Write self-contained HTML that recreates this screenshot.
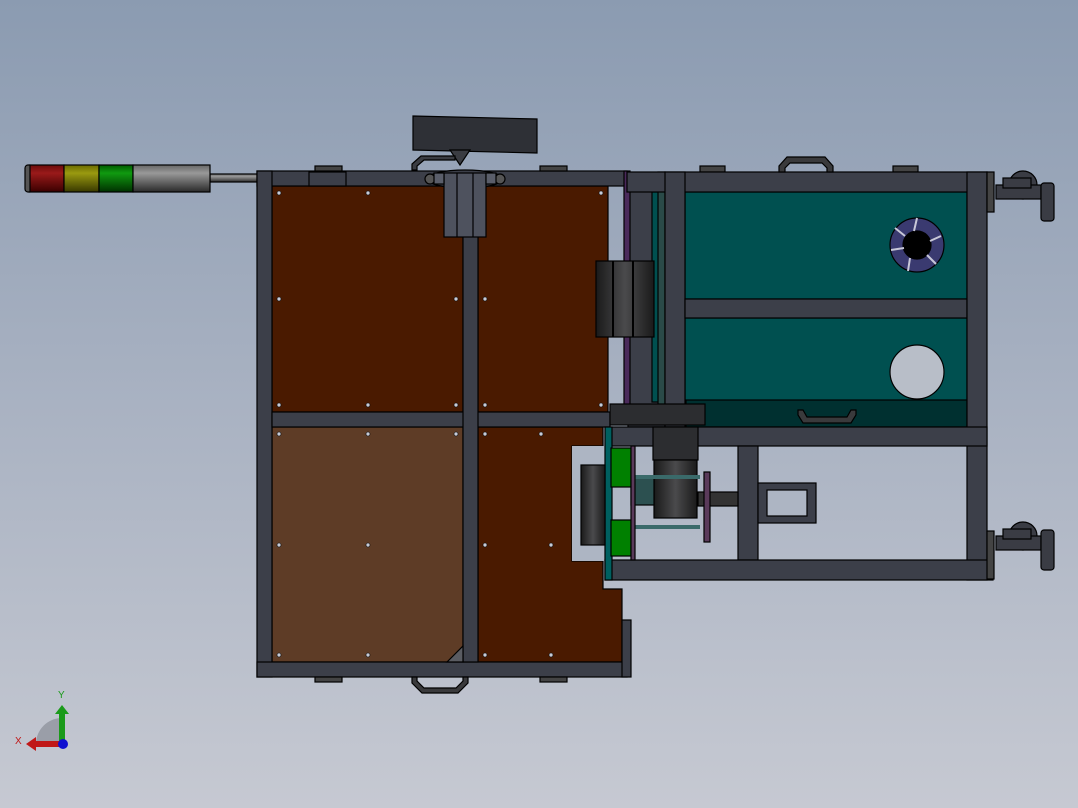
<!DOCTYPE html>
<html><head><meta charset="utf-8"><style>
html,body{margin:0;padding:0;width:1078px;height:808px;overflow:hidden}
body{background:linear-gradient(#8b9bb1,#a9b2c2 50%,#c6c9d2)}
svg{position:absolute;left:0;top:0}
</style></head><body>
<svg width="1078" height="808" viewBox="0 0 1078 808" xmlns="http://www.w3.org/2000/svg">
<defs>
<linearGradient id="cyl" x1="0" y1="0" x2="0" y2="1"><stop offset="0" stop-color="#666"/><stop offset=".3" stop-color="#999"/><stop offset="1" stop-color="#2a2a2a"/></linearGradient>
<linearGradient id="red" x1="0" y1="0" x2="0" y2="1"><stop offset="0" stop-color="#6a0a0a"/><stop offset=".3" stop-color="#9a1a1a"/><stop offset="1" stop-color="#3a0000"/></linearGradient>
<linearGradient id="yel" x1="0" y1="0" x2="0" y2="1"><stop offset="0" stop-color="#6a6a00"/><stop offset=".3" stop-color="#9a9a10"/><stop offset="1" stop-color="#383800"/></linearGradient>
<linearGradient id="grn" x1="0" y1="0" x2="0" y2="1"><stop offset="0" stop-color="#005a00"/><stop offset=".3" stop-color="#109a10"/><stop offset="1" stop-color="#003000"/></linearGradient>
<linearGradient id="roll" x1="0" y1="0" x2="1" y2="0"><stop offset="0" stop-color="#1a1a1a"/><stop offset=".5" stop-color="#4a4a4c"/><stop offset="1" stop-color="#1a1a1a"/></linearGradient>
</defs>
<g stroke="#000" stroke-width="1.2">
<rect x="210" y="174" width="100" height="8" fill="url(#cyl)"/>
<rect x="25" y="165" width="8" height="27" rx="3" fill="#555"/>
<rect x="30" y="165" width="34" height="27" fill="url(#red)"/>
<rect x="64" y="165" width="35" height="27" fill="url(#yel)"/>
<rect x="99" y="165" width="34" height="27" fill="url(#grn)"/>
<rect x="133" y="165" width="77" height="27" fill="url(#cyl)"/>
<rect x="272" y="186" width="191" height="226" fill="#4a1a00"/>
<rect x="478" y="186" width="130" height="226" fill="#4a1a00"/>
<rect x="272" y="427" width="191" height="235" fill="#5e3c26"/>
<path d="M478 427H603V446H572V561H603V589H622V662H478Z" fill="#4a1a00"/>
<rect x="572" y="446" width="33" height="115" fill="#adb5c3" stroke="none"/>
<rect x="257" y="171" width="370" height="15" fill="#3c3f49"/>
<rect x="257" y="171" width="15" height="506" fill="#3c3f49"/>
<rect x="257" y="662" width="370" height="15" fill="#3c3f49"/>
<rect x="272" y="412" width="338" height="15" fill="#3c3f49"/>
<rect x="463" y="186" width="15" height="476" fill="#3c3f49"/>
<rect x="622" y="620" width="9" height="57" fill="#3c3f49"/>
<path d="M447 662L463 646V662Z" fill="#5a5c62"/>
<rect x="315" y="166" width="27" height="5" fill="#444"/>
<rect x="540" y="166" width="27" height="5" fill="#444"/>
<rect x="315" y="677" width="27" height="5" fill="#444"/>
<rect x="540" y="677" width="27" height="5" fill="#444"/>
<rect x="700" y="166" width="25" height="6" fill="#444"/>
<rect x="893" y="166" width="25" height="6" fill="#444"/>
<path d="M412 677v6l10 10h36l10-10v-6h-5v4l-7 7h-32l-7-7v-4z" fill="#3a3a3c"/>
<path d="M413 116L537 119V153L413 150Z" fill="#2e3036"/>
<path d="M450 150L470 150L460 165Z" fill="#3a3c42"/>
<path d="M412 170V164L421 156H455V160H424L417 166V170Z" fill="#3a3c42"/>
<ellipse cx="465" cy="179" rx="38" ry="9" fill="#3c3f49"/>
<circle cx="430" cy="179" r="5" fill="#555"/><circle cx="500" cy="179" r="5" fill="#555"/>
<rect x="444" y="173" width="42" height="64" fill="#4e525e"/>
<line x1="457" y1="173" x2="457" y2="237"/><line x1="473" y1="173" x2="473" y2="237"/>
<rect x="434" y="173" width="10" height="11" fill="#5a5e6a"/><rect x="486" y="173" width="10" height="11" fill="#5a5e6a"/>
<rect x="309" y="172" width="37" height="14" fill="#3c3f49"/>
<rect x="628" y="186" width="37" height="241" fill="#3c3f49"/>
<rect x="652" y="192" width="13" height="210" fill="#005050"/>
<rect x="685" y="192" width="282" height="107" fill="#005050"/>
<rect x="685" y="318" width="282" height="85" fill="#005050"/>
<rect x="686" y="400" width="281" height="27" fill="#003030"/>
<rect x="624" y="171" width="6" height="240" fill="#4a2a5a"/>
<rect x="658" y="172" width="7" height="240" fill="#2a4a48"/>
<rect x="627" y="172" width="360" height="20" fill="#3c3f49"/>
<rect x="665" y="172" width="20" height="255" fill="#3c3f49"/>
<rect x="685" y="299" width="282" height="19" fill="#3c3f49"/>
<rect x="967" y="172" width="20" height="408" fill="#3c3f49"/>
<rect x="610" y="427" width="377" height="19" fill="#3c3f49"/>
<rect x="738" y="446" width="20" height="114" fill="#3c3f49"/>
<rect x="605" y="560" width="388" height="20" fill="#3c3f49"/>
<rect x="987" y="172" width="7" height="40" fill="#444"/>
<rect x="987" y="531" width="7" height="48" fill="#444"/>
<path d="M779 172v-6l8-9h38l8 9v6h-6v-4l-5-5h-32l-5 5v4z" fill="#3a3a3c"/>
<path d="M798 410v5l5 8h48l5-8v-5h-5l-4 7h-40l-4-7z" fill="#3a3a3c"/>
<circle cx="917" cy="245" r="27" fill="#3a3a70"/>
<circle cx="917" cy="245" r="14" fill="#000"/>
<g stroke="#c8c8d8" stroke-width="2"><line x1="917" y1="218" x2="914" y2="231"/><line x1="941" y1="236" x2="930" y2="241"/><line x1="936" y1="264" x2="927" y2="255"/><line x1="908" y1="271" x2="910" y2="258"/><line x1="891" y1="250" x2="904" y2="248"/><line x1="895" y1="228" x2="905" y2="236"/></g>
<circle cx="917" cy="372" r="27" fill="#b8bec8"/>
<g fill="#3a3c44"><circle cx="1023" cy="185" r="14"/><rect x="996" y="185" width="45" height="14"/><rect x="1041" y="183" width="13" height="38" rx="3"/><rect x="1003" y="178" width="28" height="10"/>
<circle cx="1023" cy="536" r="14"/><rect x="996" y="536" width="45" height="14"/><rect x="1041" y="530" width="13" height="40" rx="3"/><rect x="1003" y="529" width="28" height="10"/></g>
<rect x="596" y="261" width="58" height="76" fill="url(#roll)"/>
<line x1="613" y1="261" x2="613" y2="337" stroke-width="2"/><line x1="633" y1="261" x2="633" y2="337" stroke-width="2"/>
<rect x="610" y="404" width="95" height="21" fill="#2c2d30"/>
<rect x="653" y="427" width="45" height="33" fill="#2c2d30"/>
<rect x="654" y="460" width="43" height="58" fill="url(#roll)"/>
<rect x="631" y="478" width="23" height="27" fill="#2c5050"/>
<rect x="630" y="475" width="70" height="4" fill="#3a6a6a" stroke="none"/>
<rect x="630" y="525" width="70" height="4" fill="#3a6a6a" stroke="none"/>
<rect x="698" y="492" width="40" height="14" fill="#333"/>
<rect x="704" y="472" width="6" height="70" fill="#5a3a5a"/>
<rect x="605" y="427" width="7" height="153" fill="#006060"/>
<rect x="611" y="448" width="20" height="39" fill="#008000"/>
<rect x="611" y="520" width="20" height="36" fill="#008000"/>
<rect x="631" y="446" width="4" height="114" fill="#5a3a5a"/>
<rect x="581" y="465" width="24" height="80" fill="url(#roll)"/>
<rect x="758" y="483" width="58" height="40" fill="#3c3f49"/>
<rect x="767" y="490" width="40" height="26" fill="#adb5c3"/>
</g>
<g fill="#c8ccd8" stroke="#000" stroke-width=".6">
<circle cx="279" cy="193" r="2"/><circle cx="368" cy="193" r="2"/><circle cx="601" cy="193" r="2"/>
<circle cx="279" cy="299" r="2"/><circle cx="456" cy="299" r="2"/><circle cx="485" cy="299" r="2"/>
<circle cx="279" cy="405" r="2"/><circle cx="368" cy="405" r="2"/><circle cx="456" cy="405" r="2"/><circle cx="485" cy="405" r="2"/><circle cx="601" cy="405" r="2"/>
<circle cx="279" cy="434" r="2"/><circle cx="368" cy="434" r="2"/><circle cx="456" cy="434" r="2"/><circle cx="485" cy="434" r="2"/><circle cx="541" cy="434" r="2"/>
<circle cx="279" cy="545" r="2"/><circle cx="368" cy="545" r="2"/><circle cx="485" cy="545" r="2"/><circle cx="551" cy="545" r="2"/>
<circle cx="279" cy="655" r="2"/><circle cx="368" cy="655" r="2"/><circle cx="485" cy="655" r="2"/><circle cx="551" cy="655" r="2"/>
</g>
<path d="M62 744 L36 744 A26 26 0 0 1 62 718 Z" fill="#9a9ea8"/>
<rect x="59" y="712" width="6" height="32" fill="#1a9a1a"/>
<path d="M55 714L62 705L69 714Z" fill="#1a9a1a"/>
<rect x="34" y="741" width="28" height="6" fill="#c01818"/>
<path d="M36 737L26 744L36 751Z" fill="#c01818"/>
<circle cx="63" cy="744" r="5" fill="#1010d0"/>
<text x="58" y="698" font-family="Liberation Sans, sans-serif" font-size="10" fill="#1a9a1a">Y</text>
<text x="15" y="744" font-family="Liberation Sans, sans-serif" font-size="10" fill="#c01818">X</text>
</svg>
</body></html>
